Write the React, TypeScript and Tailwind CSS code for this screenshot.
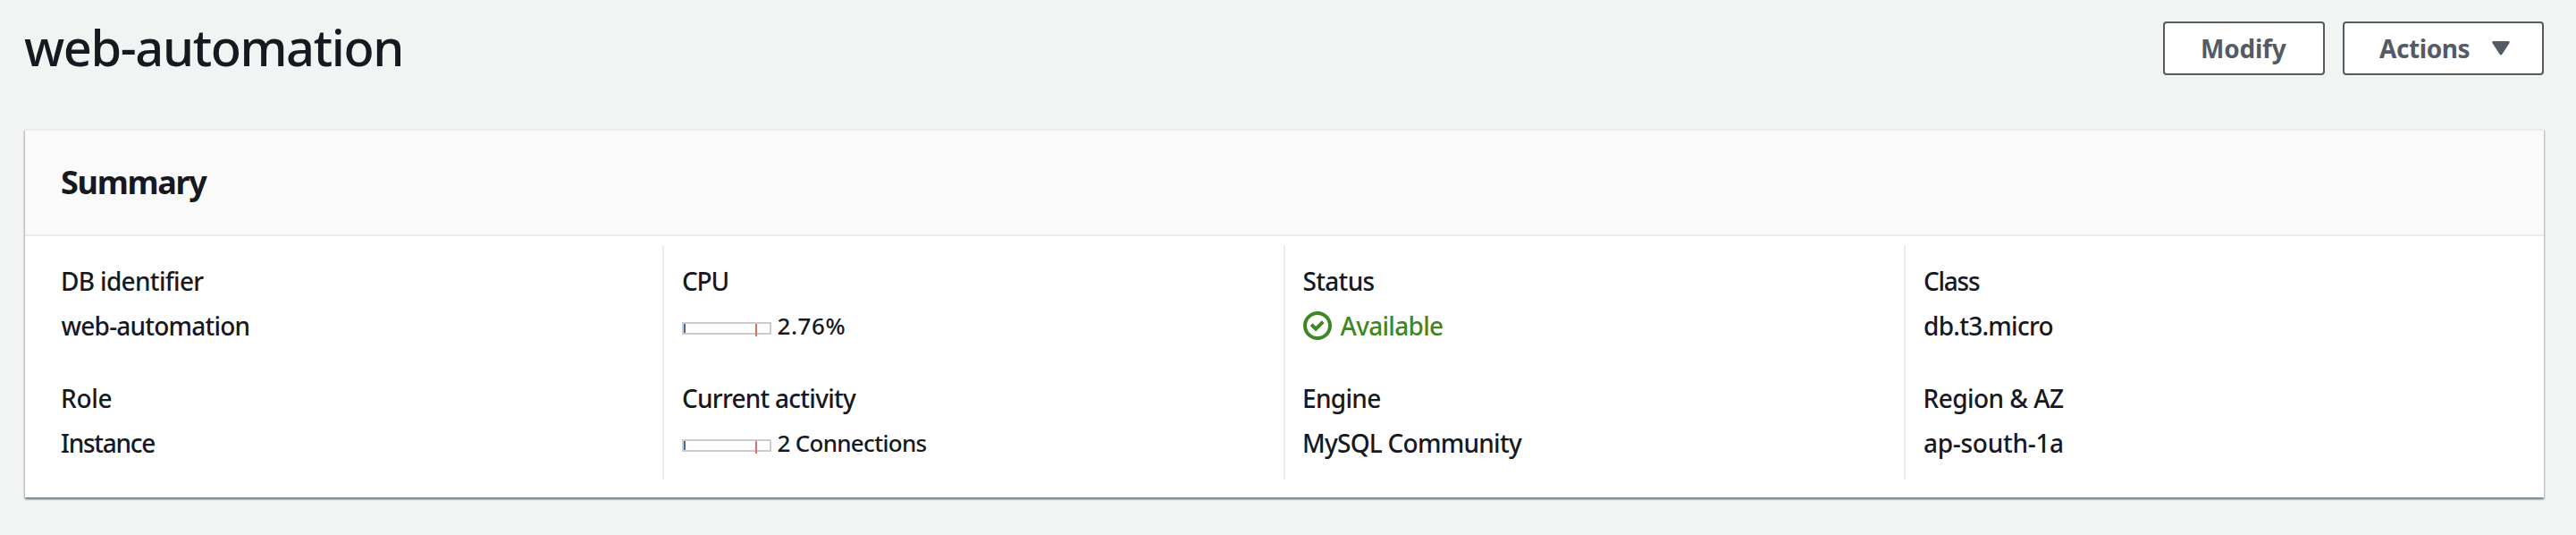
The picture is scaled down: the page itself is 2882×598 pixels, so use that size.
import React from "react";

function Gauge() {
  return (
    <span className="relative mr-[7px] h-[14px] w-[100px] shrink-0 self-start mt-[18px] border-2 border-[#cccccc] bg-white">
      <span className="absolute left-0 top-0 h-[10px] w-[2px] bg-[#4c6b8a]" />
      <span className="absolute left-[80px] top-0 h-[14px] w-[2px] bg-[#d9706d]" />
    </span>
  );
}

function CheckIcon() {
  return (
    <svg className="mr-[10px] h-[32px] w-[32px] shrink-0 self-start mt-[6px]" viewBox="0 0 16 16" fill="none" stroke="#3f8624" strokeWidth="2">
      <circle cx="8" cy="8" r="7" />
      <path d="M4.6 7.4 7.05 9.8 11.1 5.8" />
    </svg>
  );
}

function Label({ text, fit }: { text: string; fit: string }) {
  return (
    <div className="h-[44px] whitespace-nowrap leading-[44px]">
      <span className={fit}>{text}</span>
    </div>
  );
}

function Value({ children }: { children: React.ReactNode }) {
  return <div className="mt-[6px] flex h-[44px] items-baseline whitespace-nowrap leading-[44px]">{children}</div>;
}

function Column({ first = false, children }: { first?: boolean; children: React.ReactNode }) {
  return (
    <div
      className={
        first
          ? "flex flex-col gap-[37px] border-l-2 border-transparent pb-[19px] pl-[20px] pt-[18px]"
          : "flex flex-col gap-[37px] border-l-2 border-[#eaeded] pb-[19px] pl-[20px] pt-[18px]"
      }
    >
      {children}
    </div>
  );
}

export default function App() {
  return (
    <main className="h-[598px] w-[2882px] overflow-hidden bg-[#f2f3f3] pl-[28px] pr-[36px] pt-[24px] font-['Noto_Sans',sans-serif] text-[28px] font-medium text-[#16191f]">
      <header className="flex h-[60px] items-start justify-between">
        <h1 className="-ml-px -mt-[2px] text-[56px] leading-[60px] tracking-[-1.42px]">web-automation</h1>
        <div className="flex gap-[20px] font-bold leading-[56px] text-[#545b64]">
          <button className="flex h-[60px] w-[181px] items-center rounded-[4px] border-2 border-[#545b64] bg-white pl-[40px]">
            <span className="-mt-px tracking-[-0.22px]">Modify</span>
          </button>
          <button className="flex h-[60px] w-[225px] items-center rounded-[4px] border-2 border-[#545b64] bg-white pl-[39px]">
            <span className="-mt-px w-[126px] text-left tracking-[-0.42px]">Actions</span>
            <svg className="h-[16px] w-[20px]" viewBox="0 0 20 16" fill="#545b64" stroke="#545b64" strokeWidth="3" strokeLinejoin="round">
              <path d="M1.8 1.5h16.4L10 14z" />
            </svg>
          </button>
        </div>
      </header>

      <section className="mt-[60px] h-[412px] border-t-2 border-[#eaeded] bg-white shadow-[0_2px_2px_0_rgba(0,28,36,0.3),1px_2px_2px_0_rgba(0,28,36,0.2),-1px_2px_2px_0_rgba(0,28,36,0.2)]">
        <div className="h-[118px] border-b-2 border-[#eaeded] bg-[#fafafa] pl-[40px] pt-[36px]">
          <h2 className="text-[36px] font-bold leading-[44px] tracking-[-1.3px]">Summary</h2>
        </div>
        <div className="grid grid-cols-[repeat(4,694.5px)] pl-[18.5px] pt-[10px]">
          <Column first>
            <div>
              <Label text="DB identifier" fit="-ml-[0.5px] tracking-[-0.68px]" />
              <Value><span className="tracking-[-0.79px]">web-automation</span></Value>
            </div>
            <div>
              <Label text="Role" fit="-ml-[0.5px] tracking-[-0.3px]" />
              <Value><span className="-ml-[0.5px] tracking-[-1.25px]">Instance</span></Value>
            </div>
          </Column>
          <Column>
            <div>
              <Label text="CPU" fit="tracking-[-1.2px]" />
              <Value>
                <Gauge />
                <span className="-ml-[0.5px] text-[26px] tracking-[0.58px]">2.76%</span>
              </Value>
            </div>
            <div>
              <Label text="Current activity" fit="tracking-[-0.75px]" />
              <Value>
                <Gauge />
                <span className="-ml-[0.5px] text-[26px] tracking-[-0.71px]">2 Connections</span>
              </Value>
            </div>
          </Column>
          <Column>
            <div>
              <Label text="Status" fit="tracking-[-0.68px]" />
              <Value>
                <CheckIcon />
                <span className="tracking-[-0.71px] text-[#3f8624]">Available</span>
              </Value>
            </div>
            <div>
              <Label text="Engine" fit="-ml-[0.5px] tracking-[-0.7px]" />
              <Value><span className="-ml-[0.5px] tracking-[-0.75px]">MySQL Community</span></Value>
            </div>
          </Column>
          <Column>
            <div>
              <Label text="Class" fit="tracking-[-1.25px]" />
              <Value><span className="tracking-[-0.73px]">db.t3.micro</span></Value>
            </div>
            <div>
              <Label text="Region & AZ" fit="-ml-[0.5px] tracking-[-0.54px]" />
              <Value><span className="tracking-[-0.28px]">ap-south-1a</span></Value>
            </div>
          </Column>
        </div>
      </section>
    </main>
  );
}
